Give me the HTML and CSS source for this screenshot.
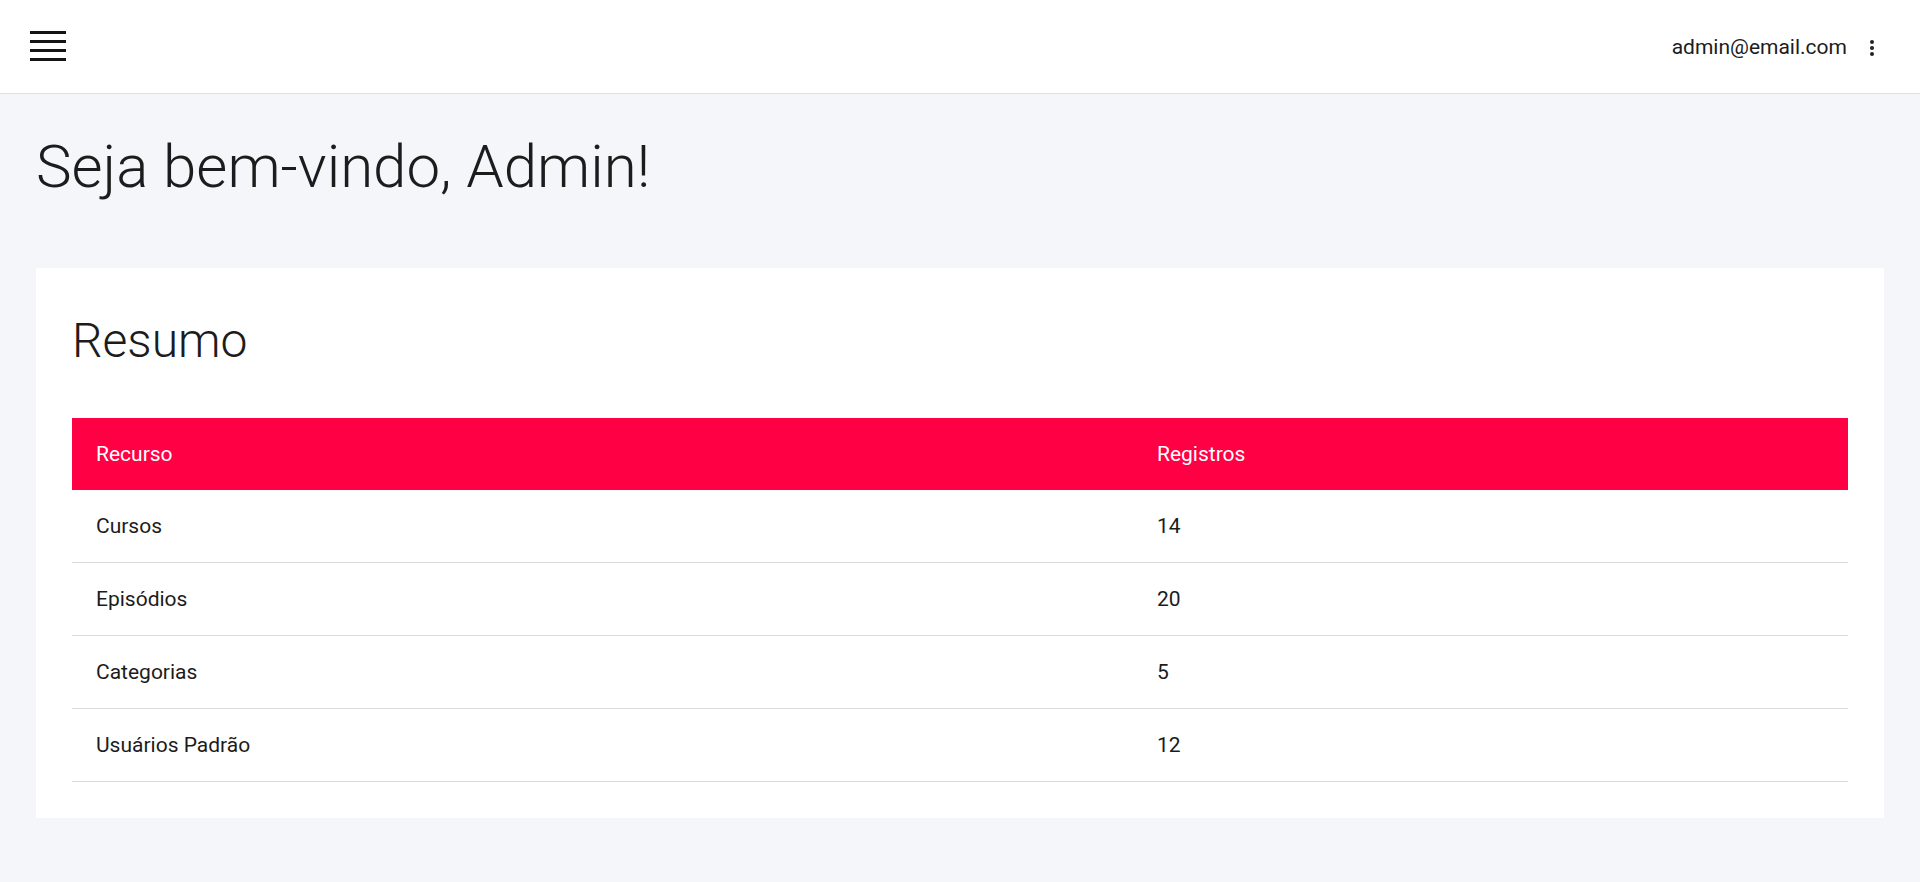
FILE: index.html
```html
<!DOCTYPE html>
<html lang="pt-BR">
<head>
<meta charset="utf-8">
<title>Dashboard</title>
<link rel="stylesheet" href="styles.css">
</head>
<body>
<header class="topbar">
  <button class="menu-btn" aria-label="Menu">
    <span></span><span></span><span></span><span></span>
  </button>
  <div class="user">
    <span class="user-email">admin@email.com</span>
    <button class="kebab" aria-label="Mais opções">
      <svg width="6" height="18" viewBox="0 0 6 18"><circle cx="3" cy="3" r="2" fill="#222"/><circle cx="3" cy="9" r="2" fill="#222"/><circle cx="3" cy="15" r="2" fill="#222"/></svg>
    </button>
  </div>
</header>
<main class="content">
  <h1 class="welcome">Seja bem-vindo, Admin!</h1>
  <section class="card">
    <h2 class="card-title">Resumo</h2>
    <table class="summary">
      <thead>
        <tr><th class="col-resource">Recurso</th><th>Registros</th></tr>
      </thead>
      <tbody>
        <tr><td>Cursos</td><td>14</td></tr>
        <tr><td>Episódios</td><td>20</td></tr>
        <tr><td>Categorias</td><td>5</td></tr>
        <tr><td>Usuários Padrão</td><td>12</td></tr>
      </tbody>
    </table>
  </section>
</main>
</body>
</html>
```
FILE: styles.css
```css
* { box-sizing: border-box; }
html, body { margin: 0; padding: 0; }
body {
  background: #f5f6fa;
  font-family: Roboto, "Liberation Sans", sans-serif;
  color: #1c1c1c;
  min-height: 882px;
}
.topbar {
  height: 94px;
  background: #ffffff;
  border-bottom: 1px solid #dfdfe8;
  display: flex;
  align-items: center;
  justify-content: space-between;
  padding: 0 45px 0 30px;
}
.menu-btn {
  width: 36px;
  height: 30px;
  padding: 0;
  border: 0;
  background: none;
  display: flex;
  flex-direction: column;
  justify-content: space-between;
  margin-top: -1px;
}
.menu-btn span {
  display: block;
  width: 36px;
  height: 3px;
  background: #141414;
}
.user {
  display: flex;
  align-items: center;
  gap: 22px;
}
.user-email {
  font-size: 21px;
  color: #1c1c1c;
}
.kebab {
  border: 0;
  background: none;
  padding: 0;
  display: flex;
  width: 6px;
  margin-top: 2px;
}
.content {
  padding: 36px 36px 0 36px;
}
.welcome {
  margin: 0 0 64px 0;
  font-size: 60px;
  line-height: 74px;
  font-weight: 300;
  color: #1c1c1c;
}
.card {
  background: #ffffff;
  padding: 43px 36px 36px 36px;
}
.card-title {
  margin: 0 0 47px 0;
  font-size: 48px;
  line-height: 60px;
  font-weight: 300;
  color: #1c1c1c;
}
.summary {
  width: 100%;
  border-collapse: collapse;
  font-size: 21px;
}
.summary th {
  background: #ff0044;
  color: #ffffff;
  font-weight: 400;
  text-align: left;
  height: 72px;
  padding: 0 24px;
}
.summary .col-resource { width: 1061px; }
.summary td {
  height: 72.75px;
  padding: 0 24px;
  border-bottom: 1px solid #dcdcdc;
  color: #1c1c1c;
}
```
